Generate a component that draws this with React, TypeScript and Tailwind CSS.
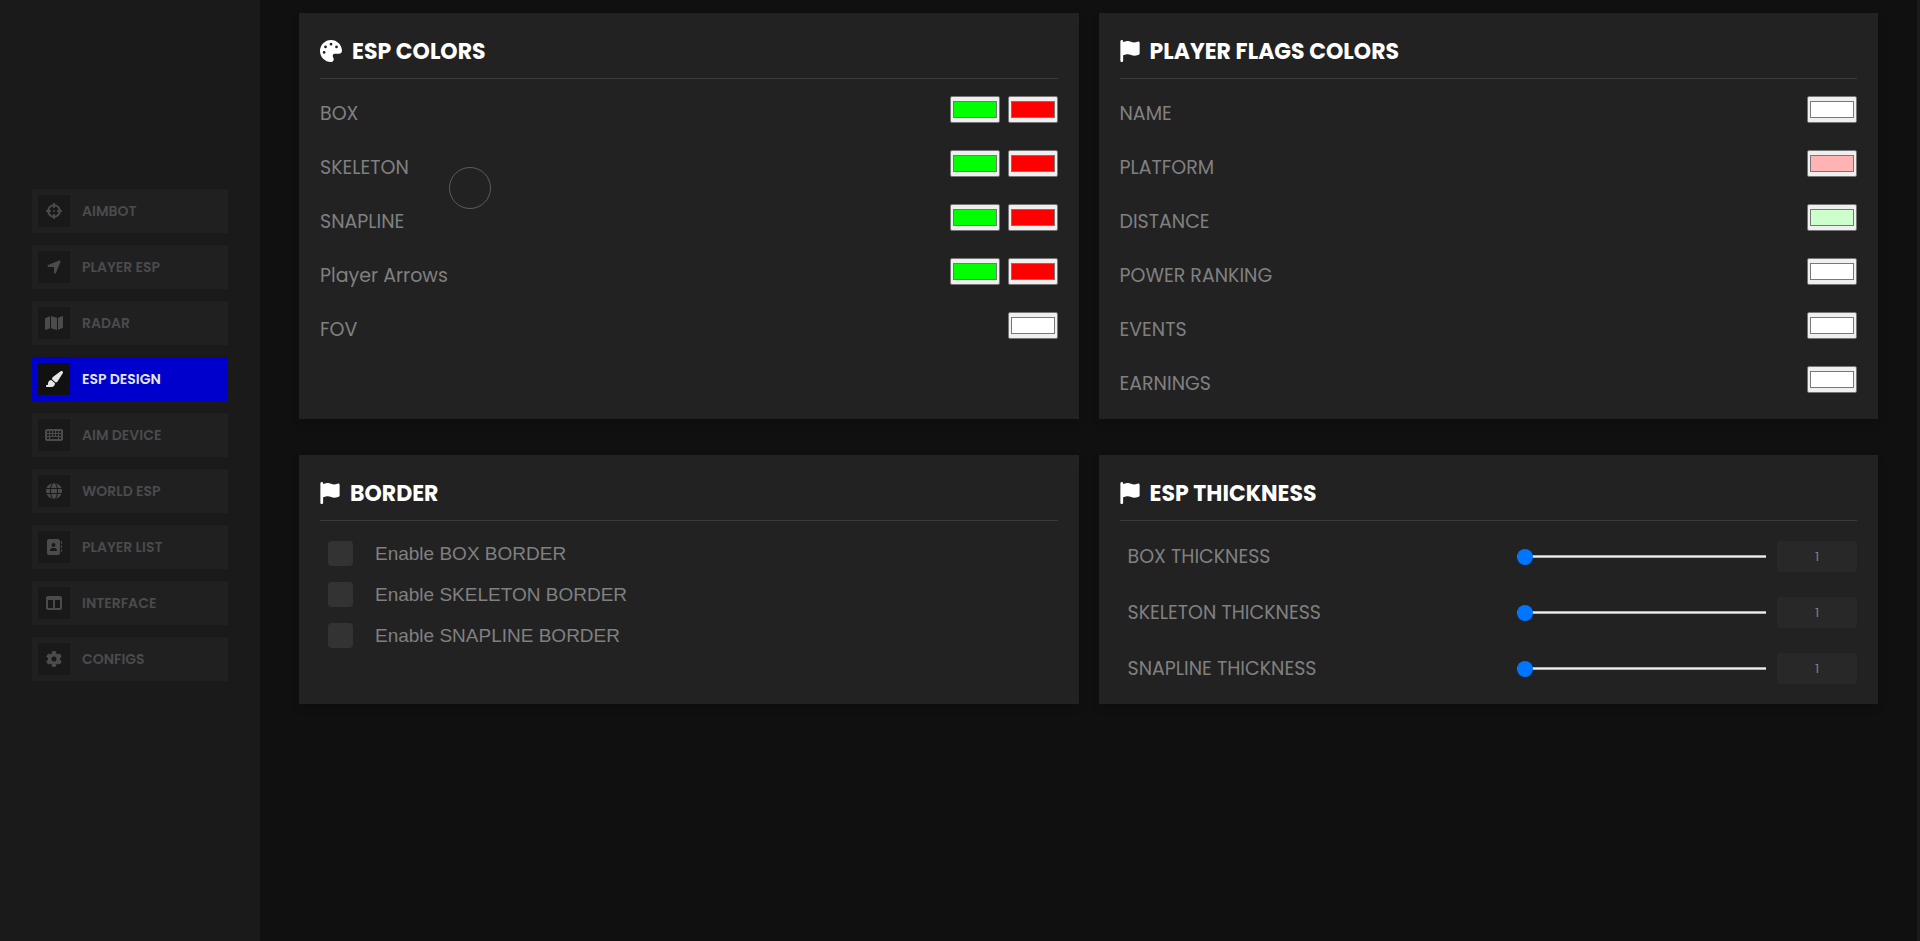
import type { ReactNode } from "react";
import {
  FaAddressBook,
  FaCrosshairs,
  FaFlag,
  FaGear,
  FaGlobe,
  FaKeyboard,
  FaLocationArrow,
  FaMap,
  FaPaintbrush,
  FaPalette,
  FaTableColumns,
} from "react-icons/fa6";

const NAV = [
  { label: "AIMBOT", Icon: FaCrosshairs },
  { label: "PLAYER ESP", Icon: FaLocationArrow },
  { label: "RADAR", Icon: FaMap, wide: true },
  { label: "ESP DESIGN", Icon: FaPaintbrush, wide: true },
  { label: "AIM DEVICE", Icon: FaKeyboard, wide: true },
  { label: "WORLD ESP", Icon: FaGlobe },
  { label: "PLAYER LIST", Icon: FaAddressBook },
  { label: "INTERFACE", Icon: FaTableColumns },
  { label: "CONFIGS", Icon: FaGear },
];

const ESP_COLORS = [
  { label: "BOX", colors: ["#00ff00", "#ff0000"] },
  { label: "SKELETON", colors: ["#00ff00", "#ff0000"] },
  { label: "SNAPLINE", colors: ["#00ff00", "#ff0000"] },
  { label: "Player Arrows", colors: ["#00ff00", "#ff0000"] },
  { label: "FOV", colors: ["#ffffff"] },
];

const FLAG_COLORS = [
  { label: "NAME", colors: ["#ffffff"] },
  { label: "PLATFORM", colors: ["#ffb3b3"] },
  { label: "DISTANCE", colors: ["#ccffcc"] },
  { label: "POWER RANKING", colors: ["#ffffff"] },
  { label: "EVENTS", colors: ["#ffffff"] },
  { label: "EARNINGS", colors: ["#ffffff"] },
];

const BORDERS = ["Enable BOX BORDER", "Enable SKELETON BORDER", "Enable SNAPLINE BORDER"];
const THICKNESS = ["BOX THICKNESS", "SKELETON THICKNESS", "SNAPLINE THICKNESS"];

function Sidebar() {
  return (
    <nav className="flex w-[260px] shrink-0 flex-col justify-center gap-3 bg-[#1a1a1a] px-8 pb-[71px]">
      {NAV.map(({ label, Icon, wide }) => {
        const active = label === "ESP DESIGN";
        return (
          <button
            key={label}
            className={`flex h-11 w-full items-center gap-3 px-1.5 text-[14px] font-semibold ${
              active ? "bg-[#0000cc] text-[#e6e6e6]" : "bg-[#202020] text-[#4b4b4d]"
            }`}
          >
            <span
              className={`flex size-8 items-center justify-center ${active ? "bg-[#111]" : "bg-[#191919]"}`}
            >
              <Icon className={wide ? "h-4 w-[18px]" : "size-4"} />
            </span>
            {label}
          </button>
        );
      })}
    </nav>
  );
}

function Card({ title, icon, children }: { title: string; icon: ReactNode; children: ReactNode }) {
  return (
    <section className="bg-[#222] px-[21px] pt-5 shadow-[0_4px_8px_rgba(0,0,0,0.15)]">
      <h2 className="flex h-[46px] items-start gap-2.5 border-b border-[#3a3a3a] pt-1 text-[22px] leading-[30px] font-bold text-white">
        <span className="flex h-7 items-center">{icon}</span>
        {title}
      </h2>
      {children}
    </section>
  );
}

function ColorRows({ rows }: { rows: { label: string; colors: string[] }[] }) {
  return (
    <div className="flex flex-col gap-[27px] pt-[17px] pb-[26px]">
      {rows.map(({ label, colors }) => (
        <div key={label} className="flex h-[27px] items-start justify-between">
          <span className="pt-1 text-[19px] leading-[27px]">{label}</span>
          <span className="flex gap-2">
            {colors.map((color, i) => (
              <input
                key={i}
                type="color"
                aria-label={`${label} color ${i + 1}`}
                defaultValue={color}
                className="h-[27px] w-[50px] rounded-[2px] border border-[#767676] bg-[#efefef]"
              />
            ))}
          </span>
        </div>
      ))}
    </div>
  );
}

function BorderRow({ label }: { label: string }) {
  return (
    <label className="flex items-center gap-[22px] font-['Liberation_Sans',Arial,sans-serif] text-[19px] leading-[25px]">
      <input
        type="checkbox"
        className="size-[25px] appearance-none rounded-[4px] bg-[#333] checked:bg-[#0000cc]"
      />
      {label}
    </label>
  );
}

function ThicknessRow({ label }: { label: string }) {
  return (
    <div className="flex h-[31px] items-center">
      <span className="flex-1 text-[19px] leading-7">{label}</span>
      <input
        type="range"
        aria-label={label}
        min={1}
        max={10}
        defaultValue={1}
        className="mr-[11px] h-[3px] w-[249px] appearance-none border-y border-[#b2b2b2] bg-[#efefef] [&::-webkit-slider-thumb]:size-4 [&::-webkit-slider-thumb]:appearance-none [&::-webkit-slider-thumb]:rounded-full [&::-webkit-slider-thumb]:bg-[#0075ff]"
      />
      <input
        type="text"
        aria-label={`${label} value`}
        defaultValue="1"
        className="h-[31px] w-20 rounded-[4px] bg-[#282828] text-center text-[13px]"
      />
    </div>
  );
}

export default function App() {
  return (
    <div className="flex min-h-screen bg-[#101010] font-[Poppins,Inter,sans-serif] text-[#808080]">
      <Sidebar />
      <main className="grid flex-1 auto-rows-min grid-cols-2 gap-x-5 gap-y-9 border-r-[3px] border-[#1a1a1a] px-[39px] pt-[13px]">
        <Card title="ESP COLORS" icon={<FaPalette className="size-[22px]" />}>
          <ColorRows rows={ESP_COLORS} />
        </Card>
        <Card title="PLAYER FLAGS COLORS" icon={<FaFlag className="h-[22px] w-5" />}>
          <ColorRows rows={FLAG_COLORS} />
        </Card>
        <Card title="BORDER" icon={<FaFlag className="h-[22px] w-5" />}>
          <div className="flex flex-col gap-4 px-2 pt-5">
            {BORDERS.map((label) => (
              <BorderRow key={label} label={label} />
            ))}
          </div>
        </Card>
        <Card title="ESP THICKNESS" icon={<FaFlag className="h-[22px] w-5" />}>
          <div className="flex flex-col gap-[25px] pt-5 pb-5 pl-2">
            {THICKNESS.map((label) => (
              <ThicknessRow key={label} label={label} />
            ))}
          </div>
        </Card>
      </main>
      <div className="pointer-events-none absolute top-[167px] left-[449px] size-[42px] rounded-full border border-[#5c5c60]" />
    </div>
  );
}
